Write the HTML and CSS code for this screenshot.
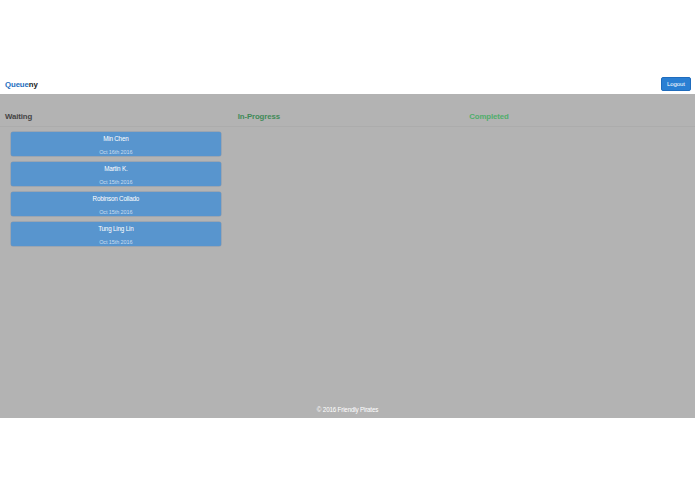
FILE: index.html
```html
<!DOCTYPE html>
<html lang="en">
<head>
<meta charset="utf-8">
<title>Queueny</title>
<link rel="stylesheet" href="styles.css">
</head>
<body>
<header class="topbar">
  <div class="brand"><span class="brand-accent">Queue</span>ny</div>
  <button class="logout" type="button">Logout</button>
</header>
<div class="stage">
  <main class="board">
    <section class="lane">
      <h2 class="lane-title waiting">Waiting</h2>
      <div class="cards">
        <div class="card"><div class="card-name">Min Chen</div><div class="card-date">Oct 16th 2016</div></div>
        <div class="card"><div class="card-name">Martin K.</div><div class="card-date">Oct 15th 2016</div></div>
        <div class="card"><div class="card-name">Robinson Collado</div><div class="card-date">Oct 15th 2016</div></div>
        <div class="card"><div class="card-name">Tung Ling Lin</div><div class="card-date">Oct 15th 2016</div></div>
      </div>
    </section>
    <section class="lane">
      <h2 class="lane-title progress">In-Progress</h2>
    </section>
    <section class="lane">
      <h2 class="lane-title done">Completed</h2>
    </section>
  </main>
  <footer class="footer">© 2016 Friendly Pirates</footer>
</div>
</body>
</html>
```
FILE: styles.css
```css
html, body {
  margin: 0;
  padding: 0;
  background: #ffffff;
  font-family: "Liberation Sans", Arial, sans-serif;
}

.topbar {
  display: flex;
  align-items: center;
  justify-content: space-between;
  height: 20px;
  padding: 74px 4px 0 5px;
}

.brand {
  font-size: 7.8px;
  line-height: 10px;
  padding-top: 1px;
  font-weight: bold;
  letter-spacing: -0.1px;
  color: #222222;
}

.brand-accent {
  color: #1f6fc0;
}

.logout {
  width: 30px;
  height: 14px;
  padding: 0;
  border: 1px solid #1f6cbd;
  border-radius: 2px;
  background: #2a7fd3;
  color: #ffffff;
  font-family: "Liberation Sans", Arial, sans-serif;
  font-size: 6px;
  letter-spacing: -0.1px;
  line-height: 12px;
}

.stage {
  display: flex;
  flex-direction: column;
  height: 324px;
  background: #b3b3b3;
}

.board {
  flex: 1;
  display: grid;
  grid-template-columns: repeat(3, 1fr);
}

.lane-title {
  margin: 0;
  padding: 18px 6px 4px;
  font-size: 7.8px;
  line-height: 10px;
  font-weight: bold;
  letter-spacing: -0.1px;
  border-bottom: 1px solid rgba(0, 0, 0, 0.04);
}

.lane:first-child .lane-title {
  padding-left: 5px;
}

.waiting { color: #444444; }
.progress { color: #3f8a57; }
.done { color: #4fae6b; }

.cards {
  display: flex;
  flex-direction: column;
  gap: 6px;
  padding: 5px 11px 0 11px;
}

.card {
  display: flex;
  flex-direction: column;
  align-items: center;
  height: 24px;
  border-radius: 2px;
  background: #5895ce;
  box-shadow: 0 0 0 0.5px rgba(60, 110, 170, 0.4);
}

.card-name {
  margin-top: 2px;
  font-size: 6.3px;
  line-height: 10px;
  letter-spacing: -0.2px;
  color: #ffffff;
}

.card-date {
  margin-top: auto;
  font-size: 5.5px;
  line-height: 7px;
  letter-spacing: -0.1px;
  color: #c9dcef;
}

.footer {
  padding-bottom: 3px;
  text-align: center;
  font-size: 6.3px;
  line-height: 10px;
  letter-spacing: -0.2px;
  color: #ffffff;
}
```
